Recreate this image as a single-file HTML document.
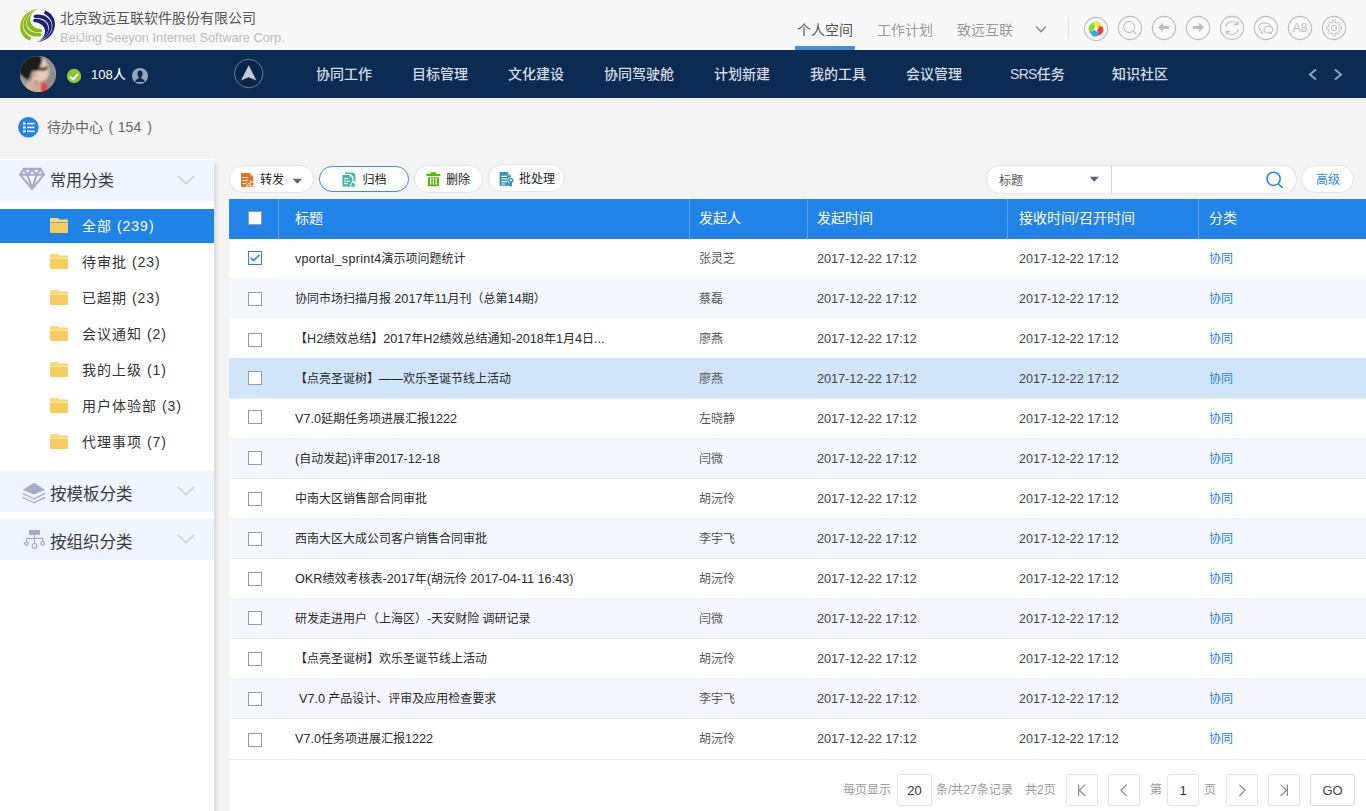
<!DOCTYPE html>
<html lang="zh-CN">
<head>
<meta charset="utf-8">
<title>待办中心</title>
<style>
*{box-sizing:border-box;margin:0;padding:0}
html,body{width:1366px;height:811px;overflow:hidden}
body{font-family:"Liberation Sans","Noto Sans CJK SC",sans-serif;background:#f4f4f4;color:#333;font-size:13px;position:relative}
.abs{position:absolute}
/* top header */
#top{position:absolute;left:0;top:0;width:1366px;height:50px;background:#f8f8f8}
#top .cn{position:absolute;left:60px;top:8px;font-size:14px;line-height:20px;color:#555;white-space:nowrap}
#top .en{position:absolute;left:60px;top:29px;font-size:12.8px;line-height:18px;color:#bdbdbd;white-space:nowrap}
.tab{position:absolute;top:20px;font-size:14px;line-height:20px;color:#999;white-space:nowrap}
.tab.on{color:#555}
#tabline{position:absolute;left:795px;top:46px;width:60px;height:4px;background:#4a8fd6}
#sep{position:absolute;left:1068px;top:17px;width:1px;height:22px;background:#e0e0e0}
.cic{position:absolute;top:16px;width:24px;height:24px}
/* nav */
#nav{position:absolute;left:0;top:50px;width:1366px;height:48px;background:#0c2b52}
#nav .it{position:absolute;top:14px;font-size:14px;line-height:20px;color:#d5dae3;white-space:nowrap;font-weight:500}

#navsh{position:absolute;left:0;top:98px;width:1366px;height:6px;background:linear-gradient(#eeeeee,#f4f4f4)}
/* crumb */
#crumb{position:absolute;left:47px;top:116px;font-size:14px;line-height:22px;color:#666;white-space:nowrap}
#crumb .n{font-size:14px;letter-spacing:.1px}
/* sidebar */
#side{position:absolute;left:0;top:160px;width:214px;height:651px;background:#fff;box-shadow:0 -1px 0 #fff,3px 3px 4px -1px rgba(0,0,0,.13)}
.sh{position:absolute;left:0;width:214px;height:41px;background:#eff6ff}
.sh .t{position:absolute;left:50px;top:8px;font-size:16px;line-height:26px;color:#3a3a3a;white-space:nowrap}
.sh svg.chev{position:absolute;left:177px;top:15px}
.si{position:absolute;left:0;width:214px;height:34px}
.si .t{position:absolute;left:82px;top:6px;font-size:14px;letter-spacing:1px;line-height:22px;color:#333;white-space:nowrap}
.si.on{background:#1f83e8}
.si.on .t{color:#fff}
.si svg{position:absolute;left:50px;top:9px}
/* toolbar */
.btn{position:absolute;top:165px;height:28px;border:1px solid #dfe6ee;border-radius:14px;background:#fff;font-size:12px;line-height:25px;color:#1c1c1c;white-space:nowrap}
.btn span{position:absolute;top:2px}
/* table */
#th{position:absolute;left:229px;top:199px;width:1137px;height:40px;background:#2283e8}
#th .c{position:absolute;top:9px;font-size:14px;line-height:20px;color:#fff;white-space:nowrap}
#th .v{position:absolute;top:0;width:1px;height:40px;background:#5aa3ee}
.row{position:absolute;left:229px;width:1137px;height:40px;background:#fff;border-bottom:1px solid #e9edf2}
.row.alt{background:#f4f8fd}
.row.hl{background:#d1e5fa}
.row .c{position:absolute;top:10px;font-size:12px;line-height:20px;color:#2a2a2a;white-space:nowrap}
.row .c1{left:66px}
.row .c2{left:470px;color:#555}
.row .c3{left:588px;top:10px;color:#444;font-size:12.65px}
.row .c4{left:790px;top:10px;color:#444;font-size:12.65px}
.row .c5{left:980px;color:#2283e8}
.l{font-size:12.5px;letter-spacing:.3px}
.d{font-size:12.65px}
.cb{position:absolute;left:19px;top:13px;width:14px;height:14px;border:1px solid #999;background:#fff}
#search{position:absolute;left:986px;top:165px;width:311px;height:29px;border:1px solid #dfe6ee;border-radius:14px;background:#fff}
#search .st{position:absolute;left:12px;top:5px;font-size:12px;line-height:20px;color:#555}
#search .sd{position:absolute;left:124px;top:0;width:1px;height:27px;background:#d6d4d2}
.btn.bl{border-color:#3d8fe8}
.cb.on{border-color:#2283e8}
.cb.on svg{position:absolute;left:0;top:0}
.pg svg{position:absolute;left:0;top:0}
.pg.g{border-color:#e4e4e4}
.pg.g2{border-color:#d6dae2}
/* pager */
#pager{position:absolute;left:229px;top:760px;width:1137px;height:51px;background:#fff}
.pg{position:absolute;top:774px;height:32px;border:1px solid #dfe6ee;border-radius:3px;background:#fff;font-size:13px;line-height:31px;text-align:center;color:#333}
.pt{position:absolute;top:780px;font-size:12px;line-height:20px;color:#999;white-space:nowrap}
</style>
</head>
<body>
<div id="top">
  <svg id="logo" width="50" height="42" viewBox="14 4 50 42" style="position:absolute;left:14px;top:4px">
<defs><g id="lg">
<path d="M38.6,9 C27,9.6 19.8,18.5 20.2,27.5 C20.5,33.5 24,38.2 30,40.6 L31.3,37.6 C26.0,34.6 22.9,30.6 22.8,25.3 C22.8,18.3 28.0,11.6 38.6,9 Z"/>
<path d="M35,10.4 C27,13.5 23.2,19.5 23.4,25.5 C23.8,32.5 31,37.6 39.8,36.4 A1.7,1.7 0 0 0 39.8,33.0 C32.5,33.8 26.8,29.6 26.4,24.3 C26,19.4 28.6,14.4 35,10.4 Z"/>
<path d="M36.4,9.8 C30,13.5 26.6,18.6 27,23.4 C27.6,29.2 33.6,32.9 40.4,32.3 A1.6,1.6 0 0 0 40.6,29.1 C36,28.6 32.4,26.6 30.8,22.8 C29.2,19 30.6,13.8 36.4,9.8 Z"/>
</g></defs>
<use href="#lg" fill="#8ab819"/>
<use href="#lg" transform="rotate(180 37.6 25.55)" fill="#1b2173"/>
</svg>
  <div class="cn">北京致远互联软件股份有限公司</div>
  <div class="en">BeiJing Seeyon Internet Software Corp.</div>
  <div class="tab on" style="left:797px">个人空间</div>
  <div class="tab" style="left:877px">工作计划</div>
  <div class="tab" style="left:957px">致远互联</div>
  <div id="tabline"></div>
  <div id="sep"></div>
<svg class="abs" style="left:1035px;top:25px" width="12" height="9" viewBox="0 0 12 9"><path d="M1 1.5 L6 6.8 L11 1.5" fill="none" stroke="#8a8a8a" stroke-width="1.3"/></svg>
<svg class="abs" style="left:1082px;top:15px" width="28" height="28" viewBox="-14 -14 28 28"><circle r="11.6" fill="none" stroke="#bcbcbc" stroke-width="1.1"/><path d="M-1.2,-7.3 Q2.4,-7.8 3.8,-6.4 L6.9,-2.6 L1.3,-1.1 Q0,-3 -3.2,-3.3 Z" fill="#fbe232" transform="rotate(0)"/><path d="M-1.2,-7.3 Q2.4,-7.8 3.8,-6.4 L6.9,-2.6 L1.3,-1.1 Q0,-3 -3.2,-3.3 Z" fill="#f43a3a" transform="rotate(90)"/><path d="M-1.2,-7.3 Q2.4,-7.8 3.8,-6.4 L6.9,-2.6 L1.3,-1.1 Q0,-3 -3.2,-3.3 Z" fill="#2aa7f5" transform="rotate(180)"/><path d="M-1.2,-7.3 Q2.4,-7.8 3.8,-6.4 L6.9,-2.6 L1.3,-1.1 Q0,-3 -3.2,-3.3 Z" fill="#7ddc2c" transform="rotate(270)"/></svg><svg class="abs" style="left:1116px;top:14px" width="28" height="28" viewBox="-14 -14 28 28"><circle r="11.6" fill="none" stroke="#bcbcbc" stroke-width="1.1"/><circle cx="-0.8" cy="-1" r="5.6" fill="none" stroke="#c0c0c0" stroke-width="1.1"/><path d="M3.2,3.2 L6.4,6" stroke="#c0c0c0" stroke-width="1.1" fill="none"/></svg><svg class="abs" style="left:1150px;top:14px" width="28" height="28" viewBox="-14 -14 28 28"><circle r="11.6" fill="none" stroke="#bcbcbc" stroke-width="1.1"/><path transform="translate(0,-.6)" d="M-6,0 L-1,-4.6 L-1,-1.5 L5,-1.5 L5,1.5 L-1,1.5 L-1,4.6 Z" fill="#bdbdbd"/></svg><svg class="abs" style="left:1184px;top:14px" width="28" height="28" viewBox="-14 -14 28 28"><circle r="11.6" fill="none" stroke="#bcbcbc" stroke-width="1.1"/><path transform="translate(0,-.6)" d="M6,0 L1,-4.6 L1,-1.5 L-5,-1.5 L-5,1.5 L1,1.5 L1,4.6 Z" fill="#bdbdbd"/></svg><svg class="abs" style="left:1218px;top:14px" width="28" height="28" viewBox="-14 -14 28 28"><circle r="11.6" fill="none" stroke="#bcbcbc" stroke-width="1.1"/><path d="M-6.2,-1 A6.3,6.3 0 0 1 5.2,-3.8" fill="none" stroke="#c0c0c0" stroke-width="1.1"/><path d="M5.8,-7 L5.6,-3.4 L2,-3.6" fill="none" stroke="#c0c0c0" stroke-width="1.1"/>
<path d="M6.2,1 A6.3,6.3 0 0 1 -5.2,3.8" fill="none" stroke="#c0c0c0" stroke-width="1.1"/><path d="M-5.8,7 L-5.6,3.4 L-2,3.6" fill="none" stroke="#c0c0c0" stroke-width="1.1"/></svg><svg class="abs" style="left:1252px;top:14px" width="28" height="28" viewBox="-14 -14 28 28"><circle r="11.6" fill="none" stroke="#bcbcbc" stroke-width="1.1"/><path d="M-4.6,3.4 Q-7,1.6 -7,-0.8 Q-7,-5 -1.4,-5 Q3.6,-5 4.6,-1.8" fill="none" stroke="#c0c0c0" stroke-width="1.1"/><path d="M-4.6,3.4 L-5,5.4 L-2.6,4.2" fill="none" stroke="#c0c0c0" stroke-width="1"/>
<ellipse cx="2.4" cy="1.6" rx="4.4" ry="3.4" fill="#f8f8f8" stroke="#c0c0c0" stroke-width="1.1"/><path d="M4.6,4.6 L5.6,5.8 L3.4,5" fill="none" stroke="#c0c0c0" stroke-width="1"/></svg><svg class="abs" style="left:1286px;top:14px" width="28" height="28" viewBox="-14 -14 28 28"><circle r="11.6" fill="none" stroke="#bcbcbc" stroke-width="1.1"/><text x="0" y="4.3" text-anchor="middle" font-size="12" fill="#c0c0c0" font-family="Liberation Sans, sans-serif">A8</text></svg><svg class="abs" style="left:1320px;top:14px" width="28" height="28" viewBox="-14 -14 28 28"><circle r="11.6" fill="none" stroke="#bcbcbc" stroke-width="1.1"/><path d="M-1.33,-5.44 L-1.21,-7.50 L1.21,-7.50 L1.33,-5.44 L2.91,-4.79 L4.45,-6.16 L6.16,-4.45 L4.79,-2.91 L5.44,-1.33 L7.50,-1.21 L7.50,1.21 L5.44,1.33 L4.79,2.91 L6.16,4.45 L4.45,6.16 L2.91,4.79 L1.33,5.44 L1.21,7.50 L-1.21,7.50 L-1.33,5.44 L-2.91,4.79 L-4.45,6.16 L-6.16,4.45 L-4.79,2.91 L-5.44,1.33 L-7.50,1.21 L-7.50,-1.21 L-5.44,-1.33 L-4.79,-2.91 L-6.16,-4.45 L-4.45,-6.16 L-2.91,-4.79 Z" fill="none" stroke="#c0c0c0" stroke-width="1" stroke-linejoin="round"/><circle r="2.7" fill="none" stroke="#c0c0c0" stroke-width="1"/></svg>
</div>
<div id="nav">
  <svg id="avatar" width="36" height="36" viewBox="0 0 36 36" style="position:absolute;left:20px;top:6px">
<defs><clipPath id="ac"><circle cx="18" cy="18" r="18"/></clipPath>
<filter id="ab" x="-20%" y="-20%" width="140%" height="140%"><feGaussianBlur stdDeviation="0.8"/></filter></defs>
<g clip-path="url(#ac)"><rect width="36" height="36" fill="#8d8d8c"/>
<g filter="url(#ab)">
<rect x="-2" y="-2" width="40" height="40" fill="#8c918d"/>
<path d="M-2,17 L6,22 L9,24 L4,38 L-2,38 Z" fill="#a09c98"/>
<path d="M3,38 C5,30 8,26 12,23.5 L20,25 L22,38 Z" fill="#d7b39f"/>
<path d="M20,2 C24,2 26.5,5 27,8 L28,11 L30,13.6 L28.6,15.6 L29,18 L28,20.5 L26.6,23.4 C24,24.6 21,24.6 19.6,26.6 L12,24.5 C13,20 14,16 16,12 C17,8 18,4 20,2 Z" fill="#e6c8b7"/>
<path d="M12,24 L20,26 L21,30 L18,37 L10,37 Z" fill="#d2ac97"/>
<path d="M-3,16 C-2,6 6,0 14,-1 C18,-1.6 21,-0.6 22,2 C22.6,5 21.4,8 20.4,10 C19.6,12.6 18.6,14.2 17,15 C15,15.8 13,15.4 11.6,16 C10.8,19 9.6,22.6 7.8,24.2 C5.6,23.4 2,20.4 -1,17.5 Z" fill="#1d1a1a"/>
<ellipse cx="14.2" cy="18.2" rx="2.3" ry="3.4" fill="#d3a791"/>
<path d="M18.2,12.2 L27.2,10.6 L27.8,13.6 L24,14.8 L18.6,14.8 Z" fill="#3d361f"/>
<path d="M15.8,24 L16.6,24 L16.6,28.2 L15.8,28.2 Z" fill="#3a2a26"/>
<path d="M21,26.8 L26.4,27.8 L28.4,31.2 L26,36 L21.4,37 L20.6,33 Z" fill="#ee3a40"/>
</g></g></svg>
  <svg class="abs" style="left:66px;top:18px" width="16" height="16" viewBox="0 0 16 16"><circle cx="8" cy="8" r="7.2" fill="#8cc63f"/><path d="M4.1,8.7 L7.1,11.3 L11.9,6" fill="none" stroke="#fff" stroke-width="2"/></svg>
<svg class="abs" style="left:131px;top:17px" width="18" height="18" viewBox="0 0 18 18"><defs><clipPath id="pc"><circle cx="9" cy="9" r="8"/></clipPath></defs><circle cx="9" cy="9" r="8" fill="#97a4bb"/><g clip-path="url(#pc)" fill="#0d2b52"><ellipse cx="9" cy="6.9" rx="2.5" ry="3.3"/><path d="M7.7,9 H10.3 V11.2 C11.4,12.2 13.6,12.2 13.9,15 H4.1 C4.4,12.2 6.6,12.2 7.7,11.2 Z"/></g></svg>
<svg class="abs" style="left:233px;top:8px" width="32" height="32" viewBox="0 0 32 32"><circle cx="15.7" cy="15.5" r="14.2" fill="#0b2548" stroke="#6b7d9b" stroke-width="1"/><path d="M15.7,7.2 L23.4,22.4 L15.7,19.2 L8,22.4 Z" fill="#c3cad6"/></svg>
<svg class="abs" style="left:1307px;top:18px" width="12" height="14" viewBox="0 0 12 14"><path d="M9,1.6 L3,6.6 L9,11.6" fill="none" stroke="#95a2b9" stroke-width="2"/></svg>
<svg class="abs" style="left:1332px;top:18px" width="12" height="14" viewBox="0 0 12 14"><path d="M3,1.6 L9,6.6 L3,11.6" fill="none" stroke="#95a2b9" stroke-width="2"/></svg>
  <div class="it" style="left:91px;top:15px;font-size:13px;color:#fff">108人</div>
  <div class="it" style="left:316px">协同工作</div>
  <div class="it" style="left:412px">目标管理</div>
  <div class="it" style="left:508px">文化建设</div>
  <div class="it" style="left:604px">协同驾驶舱</div>
  <div class="it" style="left:714px">计划新建</div>
  <div class="it" style="left:810px">我的工具</div>
  <div class="it" style="left:906px">会议管理</div>
  <div class="it" style="left:1010px"><span style="letter-spacing:-.7px">SRS</span>任务</div>
  <div class="it" style="left:1112px">知识社区</div>
</div>
<div id="navsh"></div>
<svg class="abs" style="left:18px;top:117px" width="21" height="21" viewBox="0 0 21 21"><circle cx="10.4" cy="10.3" r="10.3" fill="#2283e8"/><g fill="#fff"><rect x="5" y="5.4" width="2.6" height="2.2"/><rect x="9" y="5.8" width="7.6" height="1.5"/><rect x="5" y="9.3" width="2.6" height="2.2"/><rect x="9" y="9.7" width="7.6" height="1.5"/><rect x="5" y="13.2" width="2.6" height="2.2"/><rect x="9" y="13.6" width="7.6" height="1.5"/></g></svg>
<div id="crumb">待办中心<span style="margin-left:5.5px">(</span><span class="n" style="margin-left:4.5px">154</span><span style="margin-left:6px">)</span></div>
<div id="side">
<div class="sh" style="top:0"><svg class="abs" style="left:18px;top:7px" width="28" height="24" viewBox="0 0 28 24" fill="none" stroke="#a3adc6" stroke-width="2.1" stroke-linejoin="miter"><path d="M5.8,1.9 H22.4 L26,7.7 L14.05,21.8 L2.1,7.7 Z"/><path d="M2.1,7.7 H26"/><path stroke-linejoin="bevel" d="M5.8,1.9 L9.4,7.7 L14.05,2.3 L18.7,7.7 L22.4,1.9"/><path stroke-linejoin="bevel" d="M9.4,7.7 L14.05,21.4 L18.7,7.7"/></svg><div class="t">常用分类</div><svg class="chev" width="18" height="10" viewBox="0 0 18 10"><path d="M1 1 L9 8.6 L17 1" fill="none" stroke="#c8c8c8" stroke-width="1.2"/></svg></div>
<div class="si on" style="top:49px"><svg width="18" height="15" viewBox="0 0 18 15"><path d="M0 1 Q0 0 1 0 H7.6 Q8.4 0 8.9 0.7 L9.4 1.4 H17 Q18 1.4 18 2.4 V3.9 H0 Z" fill="#fad876"/><path d="M0 4.5 H18 V14 Q18 15 17 15 H1 Q0 15 0 14 Z" fill="#f6cd5e"/></svg><div class="t">全部 (239)</div></div>
<div class="si " style="top:85px"><svg width="18" height="15" viewBox="0 0 18 15"><path d="M0 1 Q0 0 1 0 H7.6 Q8.4 0 8.9 0.7 L9.4 1.4 H17 Q18 1.4 18 2.4 V3.9 H0 Z" fill="#fad876"/><path d="M0 4.5 H18 V14 Q18 15 17 15 H1 Q0 15 0 14 Z" fill="#f6cd5e"/></svg><div class="t">待审批 (23)</div></div>
<div class="si " style="top:121px"><svg width="18" height="15" viewBox="0 0 18 15"><path d="M0 1 Q0 0 1 0 H7.6 Q8.4 0 8.9 0.7 L9.4 1.4 H17 Q18 1.4 18 2.4 V3.9 H0 Z" fill="#fad876"/><path d="M0 4.5 H18 V14 Q18 15 17 15 H1 Q0 15 0 14 Z" fill="#f6cd5e"/></svg><div class="t">已超期 (23)</div></div>
<div class="si " style="top:157px"><svg width="18" height="15" viewBox="0 0 18 15"><path d="M0 1 Q0 0 1 0 H7.6 Q8.4 0 8.9 0.7 L9.4 1.4 H17 Q18 1.4 18 2.4 V3.9 H0 Z" fill="#fad876"/><path d="M0 4.5 H18 V14 Q18 15 17 15 H1 Q0 15 0 14 Z" fill="#f6cd5e"/></svg><div class="t">会议通知 (2)</div></div>
<div class="si " style="top:193px"><svg width="18" height="15" viewBox="0 0 18 15"><path d="M0 1 Q0 0 1 0 H7.6 Q8.4 0 8.9 0.7 L9.4 1.4 H17 Q18 1.4 18 2.4 V3.9 H0 Z" fill="#fad876"/><path d="M0 4.5 H18 V14 Q18 15 17 15 H1 Q0 15 0 14 Z" fill="#f6cd5e"/></svg><div class="t">我的上级 (1)</div></div>
<div class="si " style="top:229px"><svg width="18" height="15" viewBox="0 0 18 15"><path d="M0 1 Q0 0 1 0 H7.6 Q8.4 0 8.9 0.7 L9.4 1.4 H17 Q18 1.4 18 2.4 V3.9 H0 Z" fill="#fad876"/><path d="M0 4.5 H18 V14 Q18 15 17 15 H1 Q0 15 0 14 Z" fill="#f6cd5e"/></svg><div class="t">用户体验部 (3)</div></div>
<div class="si " style="top:265px"><svg width="18" height="15" viewBox="0 0 18 15"><path d="M0 1 Q0 0 1 0 H7.6 Q8.4 0 8.9 0.7 L9.4 1.4 H17 Q18 1.4 18 2.4 V3.9 H0 Z" fill="#fad876"/><path d="M0 4.5 H18 V14 Q18 15 17 15 H1 Q0 15 0 14 Z" fill="#f6cd5e"/></svg><div class="t">代理事项 (7)</div></div>
<div class="sh" style="top:311px"><svg class="abs" style="left:22px;top:11px" width="24" height="22" viewBox="22 482 24 22"><path d="M22.7,490 L33.9,482.7 L45.3,490 L33.9,494.6 Z" fill="#a3adc6"/><path d="M22.7,493.4 L33.9,498.8 L45.3,493.4 M22.7,497.4 L33.9,502.8 L45.3,497.4" fill="none" stroke="#a3adc6" stroke-width="1.4"/></svg><div class="t" style="font-size:16.5px;top:10px">按模板分类</div><svg class="chev" width="18" height="10" viewBox="0 0 18 10"><path d="M1 1 L9 8.6 L17 1" fill="none" stroke="#c8c8c8" stroke-width="1.2"/></svg></div>
<div class="sh" style="top:359px"><svg class="abs" style="left:23px;top:10px" width="24" height="20" viewBox="23 529 24 20"><rect x="29" y="530" width="11" height="4.9" fill="#a3adc6"/><g fill="none" stroke="#a3adc6" stroke-width="1.2"><path d="M34.5,535 V543.4 M26.5,541.4 V538.3 H42.7 V541.4"/><circle cx="34.5" cy="545.9" r="2.4"/><circle cx="42.7" cy="543.4" r="1.8"/><path d="M26.5,541.3 L28.7,543.5 L26.5,545.7 L24.3,543.5 Z"/></g></svg><div class="t" style="font-size:16.5px;top:10px">按组织分类</div><svg class="chev" width="18" height="10" viewBox="0 0 18 10"><path d="M1 1 L9 8.6 L17 1" fill="none" stroke="#c8c8c8" stroke-width="1.2"/></svg></div>
</div>
<div class="btn" style="left:229px;width:85px"><svg class="abs" style="left:11px;top:6px" width="15" height="16" viewBox="0 0 15 16"><path d="M0,0.9 H8.8 L12.2,4.3 V15.1 H0 Z" fill="#ea6f1e"/><path d="M8.8,0.9 V4.3 H12.2 Z" fill="#f3a66f"/><g fill="#fff"><rect x="1.4" y="5" width="5.8" height="1.1"/><rect x="1.4" y="8" width="5.8" height="1.1"/><rect x="1.4" y="11" width="4" height="1.1"/></g><path d="M5.2,15.6 C5.6,12.6 7.2,11.2 9.6,11.2 V8.6 L13.4,11.9 L9.6,15.2 V12.8 C8,12.8 7,13.6 6.6,15.6 Z" fill="#ea6f1e" stroke="#fff" stroke-width=".9"/></svg><span style="left:30px">转发</span><svg class="abs" style="left:61.5px;top:12px" width="11" height="7" viewBox="0 0 11 7"><path d="M0.6,0.8 H10 L5.3,5.8 Z" fill="#5a6478"/></svg></div>
<div class="btn bl" style="left:319px;width:90px;top:166px;height:26px;border-width:1.3px"><svg class="abs" style="left:22px;top:5px" width="15" height="16" viewBox="0 0 15 16"><path d="M3.2,0.4 H10.2 Q13.4,0.4 13.4,3.6 V9.4 H11.4 V4.6 L8.6,2 H3.2 Z" fill="#4db3a2"/><path d="M0.4,3 H7.6 L10.2,5.6 V14.6 H0.4 Z" fill="#4db3a2"/><path d="M7.6,3 V5.6 H10.2 Z" fill="#a5dacf"/><g stroke="#fff" stroke-width="1.1" fill="none"><path d="M2,6.8 H6.4 M2,9.2 H8 M2,11.6 H5.6"/></g><path d="M9.6,10.4 H12.8 V12.6 H14.6 L11.2,15.8 L7.8,12.6 H9.6 Z" fill="#4db3a2" stroke="#fff" stroke-width=".7"/></svg><span style="left:42.5px;top:.7px">归档</span></div>
<div class="btn" style="left:414px;width:69px"><svg class="abs" style="left:11px;top:6px" width="15" height="15" viewBox="0 0 15 15"><g fill="#5cb60f"><rect x="4.6" y="0.2" width="5.4" height="2" rx=".6"/><rect x="0.4" y="1.8" width="14" height="2.2" rx=".5"/><path d="M1.8,5.2 H13 V13.2 Q13,14.2 12,14.2 H2.8 Q1.8,14.2 1.8,13.2 Z"/></g><g stroke="#fff" stroke-width="1.2"><path d="M4.7,5.8 V12.4 M7.4,5.8 V12.4 M10.1,5.8 V12.4"/></g></svg><span style="left:31px">删除</span></div>
<div class="btn" style="left:488px;width:77px;top:164px"><svg class="abs" style="left:10px;top:6px" width="16" height="16" viewBox="0 0 16 16"><path d="M0.6,1 H8.6 L12,4.4 V14.8 H0.6 Z" fill="#3a90b8"/><path d="M8.6,1 V4.4 H12 Z" fill="#9cc8dc"/><g stroke="#fff" stroke-width="1.2" fill="none"><path d="M2.4,5.4 H8 M2.4,8 H8 M2.4,10.6 H8 M2.4,13 H6"/></g><circle cx="11.8" cy="9.4" r="3" fill="#3a90b8" stroke="#fff" stroke-width=".8"/><path d="M10.6,11 H13 V15.4 H10.6 Z" fill="#3a90b8"/><circle cx="11.8" cy="9.2" r="1" fill="#fff"/></svg><span style="left:30px">批处理</span></div>
<div id="search"><span class="st">标题</span><div class="sd"></div><svg class="abs" style="left:102px;top:10px" width="11" height="7" viewBox="0 0 11 7"><path d="M0.6,0.8 H10 L5.3,5.8 Z" fill="#5a6478"/></svg><svg class="abs" style="left:278px;top:4px" width="20" height="20" viewBox="0 0 20 20"><circle cx="8.6" cy="8.8" r="6.6" fill="none" stroke="#2283e8" stroke-width="1.5"/><path d="M13.4,13.8 L17.6,18" stroke="#2283e8" stroke-width="1.6"/></svg></div>
<div class="btn" style="left:1301px;width:53px;height:28px;line-height:26px;color:#2283e8"><span style="left:14px;top:0.5px">高级</span></div>
<div id="th"><div class="cb" style="top:12px;border-color:#999"></div>
<div class="v" style="left:49px"></div><div class="c" style="left:66px">标题</div>
<div class="v" style="left:460px"></div><div class="c" style="left:470px">发起人</div>
<div class="v" style="left:578px"></div><div class="c" style="left:588px">发起时间</div>
<div class="v" style="left:778px"></div><div class="c" style="left:790px">接收时间/召开时间</div>
<div class="v" style="left:969px"></div><div class="c" style="left:980px">分类</div>
</div>
<div class="row " style="top:239px;border-bottom-color:#f4f8fd"><div class="cb on" style="top:12px"><svg width="12" height="12" viewBox="0 0 12 12"><path d="M1.7 5.9 L4.6 8.6 L10.5 2.7" fill="none" stroke="#2283e8" stroke-width="1.6"/></svg></div><div class="c c1"><span class="l">vportal_sprint4</span>演示项问题统计</div><div class="c c2">张灵芝</div><div class="c c3">2017-12-22 17:12</div><div class="c c4">2017-12-22 17:12</div><div class="c c5">协同</div></div>
<div class="row alt" style="top:279px;border-bottom-color:#f4f8fd"><div class="cb" style="top:13px"></div><div class="c c1">协同市场扫描月报 <span class="d">2017</span>年<span class="d">11</span>月刊（总第<span class="d">14</span>期）</div><div class="c c2">蔡磊</div><div class="c c3">2017-12-22 17:12</div><div class="c c4">2017-12-22 17:12</div><div class="c c5">协同</div></div>
<div class="row " style="top:319px;border-bottom-color:#d1e5fa"><div class="cb" style="top:14px"></div><div class="c c1">【<span class="d">H2</span>绩效总结】<span class="d">2017</span>年<span class="d">H2</span>绩效总结通知<span class="d">-2018</span>年<span class="d">1</span>月<span class="d">4</span>日<span class="d">...</span></div><div class="c c2">廖燕</div><div class="c c3">2017-12-22 17:12</div><div class="c c4">2017-12-22 17:12</div><div class="c c5">协同</div></div>
<div class="row hl" style="top:359px"><div class="cb" style="top:12px"></div><div class="c c1">【点亮圣诞树】——欢乐圣诞节线上活动</div><div class="c c2">廖燕</div><div class="c c3">2017-12-22 17:12</div><div class="c c4">2017-12-22 17:12</div><div class="c c5">协同</div></div>
<div class="row " style="top:399px"><div class="cb" style="top:11px"></div><div class="c c1"><span class="d">V7.0</span>延期任务项进展汇报<span class="d">1222</span></div><div class="c c2">左晓静</div><div class="c c3">2017-12-22 17:12</div><div class="c c4">2017-12-22 17:12</div><div class="c c5">协同</div></div>
<div class="row alt" style="top:439px"><div class="cb" style="top:12px"></div><div class="c c1"><span class="d">(</span>自动发起<span class="d">)</span>评审<span class="d">2017-12-18</span></div><div class="c c2">闫微</div><div class="c c3">2017-12-22 17:12</div><div class="c c4">2017-12-22 17:12</div><div class="c c5">协同</div></div>
<div class="row " style="top:479px"><div class="cb" style="top:13px"></div><div class="c c1">中南大区销售部合同审批</div><div class="c c2">胡沅伶</div><div class="c c3">2017-12-22 17:12</div><div class="c c4">2017-12-22 17:12</div><div class="c c5">协同</div></div>
<div class="row alt" style="top:519px"><div class="cb" style="top:13px"></div><div class="c c1">西南大区大成公司客户销售合同审批</div><div class="c c2">李宇飞</div><div class="c c3">2017-12-22 17:12</div><div class="c c4">2017-12-22 17:12</div><div class="c c5">协同</div></div>
<div class="row " style="top:559px"><div class="cb" style="top:13px"></div><div class="c c1"><span class="d">OKR</span>绩效考核表<span class="d">-2017</span>年<span class="d">(</span>胡沅伶 <span class="d">2017-04-11 16:43)</span></div><div class="c c2">胡沅伶</div><div class="c c3">2017-12-22 17:12</div><div class="c c4">2017-12-22 17:12</div><div class="c c5">协同</div></div>
<div class="row alt" style="top:599px;background:#f6f7fd"><div class="cb" style="top:12px"></div><div class="c c1">研发走进用户（上海区）<span class="d">-</span>天安财险 调研记录</div><div class="c c2">闫微</div><div class="c c3">2017-12-22 17:12</div><div class="c c4">2017-12-22 17:12</div><div class="c c5">协同</div></div>
<div class="row " style="top:639px"><div class="cb" style="top:13px"></div><div class="c c1">【点亮圣诞树】欢乐圣诞节线上活动</div><div class="c c2">胡沅伶</div><div class="c c3">2017-12-22 17:12</div><div class="c c4">2017-12-22 17:12</div><div class="c c5">协同</div></div>
<div class="row alt" style="top:679px;background:#f6f7fd"><div class="cb" style="top:13px"></div><div class="c c1" style="left:70px"><span class="d">V7.0</span> 产品设计、评审及应用检查要求</div><div class="c c2">李宇飞</div><div class="c c3">2017-12-22 17:12</div><div class="c c4">2017-12-22 17:12</div><div class="c c5">协同</div></div>
<div class="row " style="top:719px;height:41px"><div class="cb" style="top:14px"></div><div class="c c1"><span class="d">V7.0</span>任务项进展汇报<span class="d">1222</span></div><div class="c c2">胡沅伶</div><div class="c c3">2017-12-22 17:12</div><div class="c c4">2017-12-22 17:12</div><div class="c c5">协同</div></div>
<div id="pager"></div>
<div class="pt" style="left:843px">每页显示</div>
<div class="pg g" style="left:897px;width:35px">20</div>
<div class="pt" style="left:936px">条/共27条记录</div>
<div class="pt" style="left:1025px">共2页</div>
<div class="pg" style="left:1066px;width:32px"><svg width="30" height="30" viewBox="0 0 30 30" fill="none" stroke="#8a8a8a" stroke-width="1.2"><path d="M11.6,9.6 V21 M18.4,9.6 L12.4,15.3 L18.4,21"/></svg></div>
<div class="pg" style="left:1108px;width:32px"><svg width="30" height="30" viewBox="0 0 30 30" fill="none" stroke="#8a8a8a" stroke-width="1.2"><path d="M17.6,9.6 L12,15.3 L17.6,21"/></svg></div>
<div class="pt" style="left:1150px">第</div>
<div class="pg g" style="left:1167px;width:32px">1</div>
<div class="pt" style="left:1204px">页</div>
<div class="pg" style="left:1226px;width:32px"><svg width="30" height="30" viewBox="0 0 30 30" fill="none" stroke="#8a8a8a" stroke-width="1.2"><path d="M12.4,9.6 L18,15.3 L12.4,21"/></svg></div>
<div class="pg" style="left:1268px;width:32px"><svg width="30" height="30" viewBox="0 0 30 30" fill="none" stroke="#8a8a8a" stroke-width="1.2"><path d="M18.4,9.6 V21 M11.6,9.6 L17.6,15.3 L11.6,21"/></svg></div>
<div class="pg g2" style="left:1310px;width:45px;color:#444">GO</div>
</body>
</html>
